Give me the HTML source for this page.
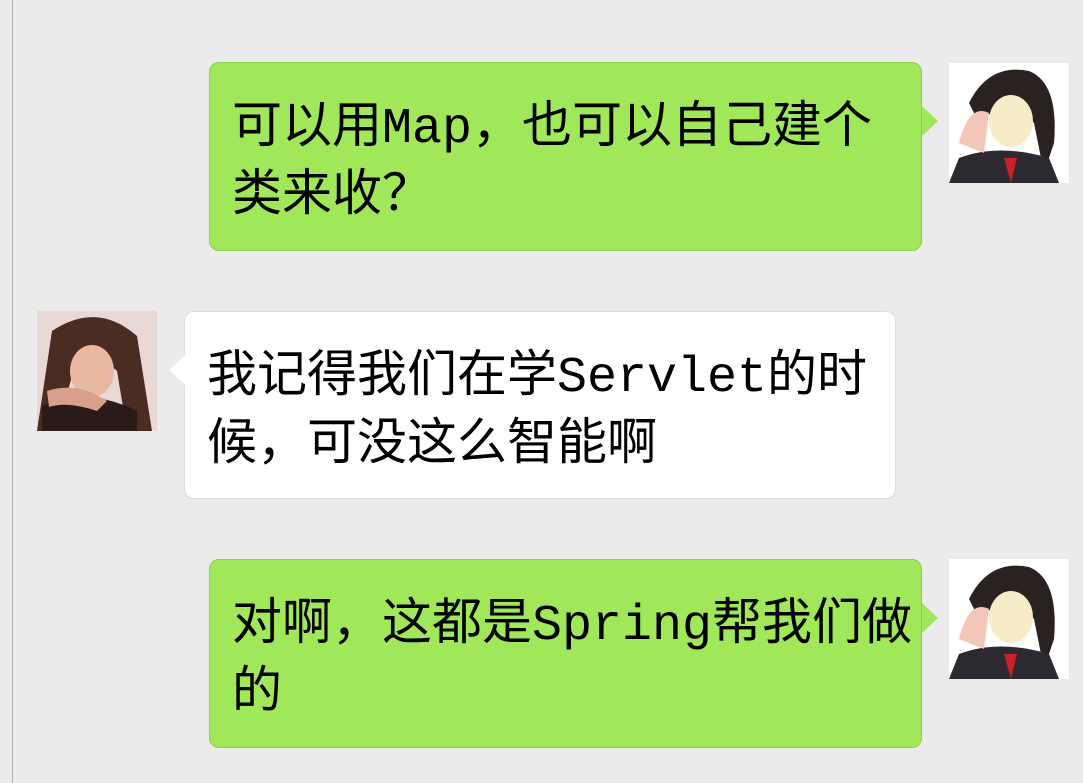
<!DOCTYPE html>
<html><head><meta charset="utf-8"><style>
body{margin:0;width:1083px;height:783px;background:#ebebeb;position:relative;overflow:hidden;font-family:"Liberation Mono","Noto Sans CJK SC",monospace;}
.line{position:absolute;left:12px;top:0;width:1px;height:783px;background:#b0b0b0}
.b{position:absolute;border-radius:10px;font-size:50px;line-height:68px;color:#000;box-sizing:border-box;padding:33px 0 0 22px;white-space:nowrap;overflow:hidden}
.g{background:#a0e75a;border:1px solid #8fcf50}
.w{background:#fff;border:1px solid #dcdcdc}
.ar{position:absolute;width:0;height:0;border-top:15px solid transparent;border-bottom:15px solid transparent}
.av{position:absolute;width:120px;height:120px;overflow:hidden}
</style></head><body>
<div class="line"></div>

<div class="b g" style="left:209px;top:62px;width:713px;height:189px">可以用Map，也可以自己建个<br>类来收？</div>
<div class="ar" style="left:922px;top:106px;border-left:16px solid #a0e75a"></div>
<div class="av" style="left:949px;top:63px;background:#fff">
<svg width="120" height="120"><path d="M20 40 Q40 0 80 8 Q110 20 105 80 L95 110 L85 60 Q60 30 30 60 Z" fill="#2a2220"/><ellipse cx="62" cy="58" rx="22" ry="26" fill="#f6ecc8"/><path d="M0 120 L10 95 Q50 80 100 95 L110 120 Z" fill="#2c2a30"/><path d="M55 95 L62 120 L68 95 Z" fill="#c8202a"/><path d="M10 80 Q20 40 40 50 L35 90 Z" fill="#f3c6b8"/></svg></div>

<div class="b w" style="left:184px;top:311px;width:712px;height:188px">我记得我们在学Servlet的时<br>候，可没这么智能啊</div>
<div class="ar" style="left:169px;top:355px;border-right:16px solid #fff"></div>
<div class="av" style="left:37px;top:311px;background:#e9d9d6">
<svg width="120" height="120"><path d="M15 20 Q60 -10 100 25 L115 120 L90 120 L80 60 Q60 40 35 65 L20 120 L0 120 Z" fill="#4a2c22"/><ellipse cx="55" cy="60" rx="22" ry="26" fill="#e8b8a0"/><path d="M5 95 Q50 75 100 100 L100 120 L5 120 Z" fill="#2a1a18"/><path d="M10 80 Q40 70 70 90 L60 100 Q30 90 12 96 Z" fill="#d8a08c"/></svg></div>

<div class="b g" style="left:209px;top:559px;width:713px;height:189px">对啊，这都是Spring帮我们做<br>的</div>
<div class="ar" style="left:922px;top:603px;border-left:16px solid #a0e75a"></div>
<div class="av" style="left:949px;top:559px;background:#fff">
<svg width="120" height="120"><path d="M20 40 Q40 0 80 8 Q110 20 105 80 L95 110 L85 60 Q60 30 30 60 Z" fill="#2a2220"/><ellipse cx="62" cy="58" rx="22" ry="26" fill="#f6ecc8"/><path d="M0 120 L10 95 Q50 80 100 95 L110 120 Z" fill="#2c2a30"/><path d="M55 95 L62 120 L68 95 Z" fill="#c8202a"/><path d="M10 80 Q20 40 40 50 L35 90 Z" fill="#f3c6b8"/></svg></div>
</body></html>
